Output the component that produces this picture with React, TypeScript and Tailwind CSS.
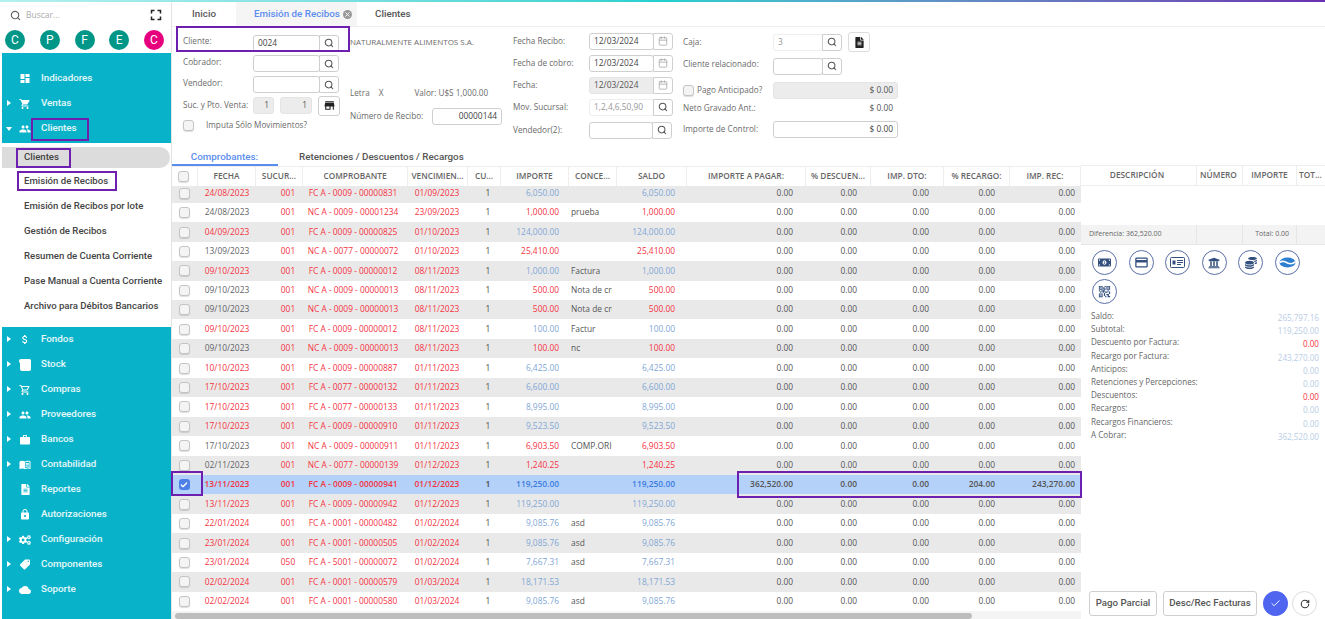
import React from "react";
import { Search, Calendar, Check, RotateCw, X } from "lucide-react";
import {
  MdDashboard, MdShoppingCart, MdPeople, MdAttachMoney, MdWork, MdLock, MdLocalOffer, MdCloud,
  MdMenuBook, MdStore, MdCreditCard, MdQrCode2, MdFullscreen, MdOutlineShoppingCart,
} from "react-icons/md";
import { FaFileAlt, FaCogs, FaMoneyBillAlt, FaUniversity, FaCoins } from "react-icons/fa";

const R = "#f5333f", G = "#5f6368", B = "#7fa7d6";

type Row = [string, string, string, string, string, string, string, string, string, string, string, string, string];
const z = ["0.00", "0.00", "0.00", "0.00", "0.00"] as const;
const mk = (f: string, s: string, c: string, v: string, i: string, n: string): Row => [f, s, c, v, "1", i, n, i, ...z];
const rows: { d: Row; dc: string; ac: string; sel?: boolean }[] = [
  { d: mk("24/08/2023","001","FC A - 0009 - 00000831","01/09/2023","6,050.00",""), dc: R, ac: B },
  { d: mk("24/08/2023","001","NC A - 0009 - 00001234","23/09/2023","1,000.00","prueba"), dc: G, ac: R },
  { d: mk("04/09/2023","001","FC A - 0009 - 00000825","01/10/2023","124,000.00",""), dc: R, ac: B },
  { d: mk("13/09/2023","001","NC A - 0077 - 00000072","01/10/2023","25,410.00",""), dc: G, ac: R },
  { d: mk("09/10/2023","001","FC A - 0009 - 00000012","08/11/2023","1,000.00","Factura"), dc: R, ac: B },
  { d: mk("09/10/2023","001","NC A - 0009 - 00000013","08/11/2023","500.00","Nota de credito"), dc: G, ac: R },
  { d: mk("09/10/2023","001","NC A - 0009 - 00000013","08/11/2023","500.00","Nota de credito"), dc: G, ac: R },
  { d: mk("09/10/2023","001","FC A - 0009 - 00000012","08/11/2023","100.00","Factur"), dc: R, ac: B },
  { d: mk("09/10/2023","001","NC A - 0009 - 00000013","08/11/2023","100.00","nc"), dc: G, ac: R },
  { d: mk("10/10/2023","001","FC A - 0009 - 00000887","01/11/2023","6,425.00",""), dc: R, ac: B },
  { d: mk("17/10/2023","001","FC A - 0077 - 00000132","01/11/2023","6,600.00",""), dc: R, ac: B },
  { d: mk("17/10/2023","001","FC A - 0077 - 00000133","01/11/2023","8,995.00",""), dc: R, ac: B },
  { d: mk("17/10/2023","001","FC A - 0009 - 00000910","01/11/2023","9,523.50",""), dc: R, ac: B },
  { d: mk("17/10/2023","001","NC A - 0009 - 00000911","01/11/2023","6,903.50","COMP.ORIGINAL"), dc: G, ac: R },
  { d: mk("02/11/2023","001","NC A - 0077 - 00000139","01/12/2023","1,240.25",""), dc: G, ac: R },
  { d: ["13/11/2023","001","FC A - 0009 - 00000941","01/12/2023","1","119,250.00","","119,250.00","362,520.00","0.00","0.00","204.00","243,270.00"], dc: R, ac: "#3d7ce0", sel: true },
  { d: mk("13/11/2023","001","FC A - 0009 - 00000942","01/12/2023","119,250.00",""), dc: R, ac: B },
  { d: mk("22/01/2024","001","FC A - 0001 - 00000482","01/02/2024","9,085.76","asd"), dc: R, ac: B },
  { d: mk("23/01/2024","001","FC A - 0001 - 00000505","01/02/2024","9,085.76","asd"), dc: R, ac: B },
  { d: mk("23/01/2024","050","FC A - 5001 - 00000072","01/02/2024","7,667.31","asd"), dc: R, ac: B },
  { d: mk("02/02/2024","001","FC A - 0001 - 00000579","01/03/2024","18,171.53",""), dc: R, ac: B },
  { d: mk("02/02/2024","001","FC A - 0001 - 00000580","01/03/2024","9,085.76","asd"), dc: R, ac: B },
];

const headers: { t: string; w: string }[] = [
  { t: "FECHA", w: "w-[58px]" }, { t: "SUCUR...", w: "w-[47px]" }, { t: "COMPROBANTE", w: "w-[105px]" },
  { t: "VENCIMIEN...", w: "w-[60px]" }, { t: "CU...", w: "w-[33px]" }, { t: "IMPORTE", w: "w-[68px]" },
  { t: "CONCE...", w: "w-[48px]" }, { t: "SALDO", w: "w-[70px]" }, { t: "IMPORTE A PAGAR:", w: "w-[119px]" },
  { t: "% DESCUEN...", w: "w-[65px]" }, { t: "IMP. DTO:", w: "w-[73px]" }, { t: "% RECARGO:", w: "w-[66px]" }, { t: "IMP. REC:", w: "w-[71px]" },
];

function Box() {
  return <span className="block w-[11px] h-[11px] rounded-[3px] border border-[#c4c4c4] bg-[#f4f4f4] shadow-[0_1px_1px_#0002]" />;
}

function MenuItem({ icon, label, arrow, open }: { icon: React.ReactNode; label: string; arrow?: boolean; open?: boolean }) {
  return (
    <div className="h-[25px] flex items-center text-white/90 text-[9.8px] font-medium relative pl-[17px]">
      {arrow && (open
        ? <span className="absolute left-[4px] top-[11px] border-x-[3px] border-x-transparent border-t-[4px] border-t-white" />
        : <span className="absolute left-[5px] top-[9px] border-y-[3px] border-y-transparent border-l-[4px] border-l-white" />)}
      <span className="w-[12px] h-[14px] flex items-center justify-center text-white">{icon}</span>
      <span className="ml-[10px]">{label}</span>
    </div>
  );
}

function Avatar({ c, pink }: { c: string; pink?: boolean }) {
  return <span className={`w-[20px] h-[20px] rounded-full text-white text-[12px] flex items-center justify-center ${pink ? "bg-[#e6007e]" : "bg-[#009688]"}`}>{c}</span>;
}

function Input({ w, v, right, disabled, faint }: { w: string; v?: string; right?: boolean; disabled?: boolean; faint?: boolean }) {
  return (
    <span className={`${w} h-[17px] px-[4px] flex items-center text-[8.4px] rounded-[3px] border ${faint ? "border-[#eeeeee] text-[#999]" : disabled ? "border-[#e4e4e4] bg-[#ececec] text-[#555]" : "border-[#cfcfcf] text-[#444]"} ${right ? "justify-end" : ""}`}>{v}</span>
  );
}

function IconBtn({ kind }: { kind: "search" | "cal" }) {
  return (
    <span className="w-[20px] h-[17px] flex items-center justify-center border border-[#cfcfcf] rounded-r-[3px] -ml-px bg-white text-[#555]">
      {kind === "search" ? <Search size={10} strokeWidth={2.5} /> : <Calendar size={10} className="text-[#aaa]" />}
    </span>
  );
}

function Lookup({ w, v, faint }: { w: string; v?: string; faint?: boolean }) {
  return <span className="flex"><Input w={w} v={v} faint={faint} /><IconBtn kind="search" /></span>;
}

function DateField({ disabled }: { disabled?: boolean }) {
  return <span className="flex"><Input w="w-[65px]" v="12/03/2024" disabled={disabled} /><IconBtn kind="cal" /></span>;
}

function Label({ children, w, up }: { children: React.ReactNode; w?: string; up?: boolean }) {
  return <span className={`${w ?? ""} ${up ? "pb-[3px]" : ""} text-[8.2px] text-[#6b6b6b] whitespace-nowrap`}>{children}</span>;
}

function Round({ children }: { children: React.ReactNode }) {
  return <span className="w-[25px] h-[25px] rounded-full border border-[#5a6fa8] flex items-center justify-center text-[#33507f]">{children}</span>;
}

const LB = "#b9cde6";
const totals: [string, string, string][] = [
  ["Saldo:", "265,797.16", LB], ["Subtotal:", "119,250.00", LB], ["Descuento por Factura:", "0.00", R],
  ["Recargo por Factura:", "243,270.00", LB], ["Anticipos:", "0.00", LB], ["Retenciones y Percepciones:", "0.00", LB],
  ["Descuentos:", "0.00", R], ["Recargos:", "0.00", LB], ["Recargos Financieros:", "0.00", LB], ["A Cobrar:", "362,520.00", LB],
];

export default function App() {
  return (
    <div className="w-[1325px] h-[619px] overflow-hidden bg-white relative font-['Open_Sans',sans-serif]">
      <div className="h-[2px] bg-gradient-to-r from-[#b5f0f0] via-[#20d0d0] to-[#6a2fb0]" />
      <div className="flex h-[617px]">
        {/* Sidebar */}
        <aside className="w-[172px] shrink-0 pl-[2px] border-r border-r-[#e4e4e4] font-['Roboto',sans-serif] flex flex-col">
          <div className="h-[24px] mt-[1px] flex items-center pl-[8px] pr-[6px] text-[#aaa] text-[8.5px]">
            <Search size={11} className="text-[#666]" strokeWidth={2.5} />
            <span className="ml-[5px] flex-1 font-['Open_Sans',sans-serif]">Buscar...</span>
            <MdFullscreen size={18} className="text-[#222]" />
          </div>
          <div className="h-[26px] flex items-center justify-between pl-[3px] pr-[7px]">
            <Avatar c="C" /><Avatar c="P" /><Avatar c="F" /><Avatar c="E" /><Avatar c="C" pink />
          </div>
          <div className="bg-[#08b3c9] pt-[13px] h-[90px]">
            <MenuItem icon={<MdDashboard size={13} />} label="Indicadores" />
            <MenuItem icon={<MdShoppingCart size={14} />} label="Ventas" arrow />
            <MenuItem icon={<MdPeople size={14} />} label="Clientes" arrow open />
          </div>
          <div className="h-[184px] pt-[4px] text-[9.6px] font-medium text-[#444] bg-white">
            <div className="h-[21px] flex items-center pl-[22px] bg-[#dcdcdc] rounded-r-full mr-[1px]">Clientes</div>
            <div className="h-[25px] flex items-center pl-[22px] mt-[1px]">Emisión de Recibos</div>
            {["Emisión de Recibos por lote", "Gestión de Recibos", "Resumen de Cuenta Corriente", "Pase Manual a Cuenta Corriente", "Archivo para Débitos Bancarios"].map((t) => (
              <div key={t} className="h-[25px] flex items-center pl-[22px] whitespace-nowrap">{t}</div>
            ))}
          </div>
          <div className="bg-[#08b3c9] flex-1">
            <MenuItem icon={<MdAttachMoney size={15} />} label="Fondos" arrow />
            <MenuItem icon={
              <svg width="12" height="12" viewBox="0 0 12 12" fill="currentColor"><path d="M2 0h8.5A1.5 1.5 0 0 1 12 1.5V10a2 2 0 0 1-2 2H3a2 2 0 0 1-2-2V3.5H0V2a2 2 0 0 1 2-2Z" /></svg>
            } label="Stock" arrow />
            <MenuItem icon={<MdOutlineShoppingCart size={14} />} label="Compras" arrow />
            <MenuItem icon={<MdPeople size={14} />} label="Proveedores" arrow />
            <MenuItem icon={<MdWork size={14} />} label="Bancos" arrow />
            <MenuItem icon={<MdMenuBook size={13} />} label="Contabilidad" arrow />
            <MenuItem icon={<FaFileAlt size={11} />} label="Reportes" />
            <MenuItem icon={<MdLock size={13} />} label="Autorizaciones" />
            <MenuItem icon={<FaCogs size={12} />} label="Configuración" arrow />
            <MenuItem icon={<MdLocalOffer size={13} className="-scale-x-100" />} label="Componentes" arrow />
            <MenuItem icon={<MdCloud size={14} />} label="Soporte" arrow />
          </div>
        </aside>

        {/* Main */}
        <main className="flex-1 min-w-0 flex flex-col">
          <div className="h-[25px] flex font-['Roboto',sans-serif] text-[9.8px] font-medium text-[#555] border-b border-[#eeeeee]">
            <div className="w-[64px] flex items-center justify-center">Inicio</div>
            <div className="w-[121px] flex items-center pl-[18px] bg-[#f5f5f5] text-[#5b8def] whitespace-nowrap">
              Emisión de Recibos
              <span className="ml-[3px] w-[9px] h-[9px] rounded-full bg-[#999] flex items-center justify-center text-white"><X size={7} strokeWidth={3} /></span>
            </div>
            <div className="ml-[18px] flex items-center">Clientes</div>
          </div>

          {/* Form */}
          <div className="h-[121px] flex pl-[11px] pt-[5px]">
            <div className="w-[167px] flex flex-col">
              <div className="h-[22px] shrink-0 flex items-center"><Label up w="w-[70px]">Cliente:</Label><Lookup w="w-[67px]" v="0024" /></div>
              <div className="h-[19px] shrink-0 flex items-center"><Label up w="w-[70px]">Cobrador:</Label><Lookup w="w-[67px]" /></div>
              <div className="h-[23px] shrink-0 flex items-center"><Label up w="w-[70px]">Vendedor:</Label><Lookup w="w-[67px]" /></div>
              <div className="h-[19px] shrink-0 flex items-center">
                <Label w="w-[70px]">Suc. y Pto. Venta:</Label>
                <Input w="w-[21px]" v="1" right disabled /><span className="w-[6px]" /><Input w="w-[32px]" v="1" right disabled />
                <span className="ml-[6px] w-[22px] h-[20px] border border-[#cfcfcf] rounded-[3px] flex items-center justify-center text-[#222]"><MdStore size={13} /></span>
              </div>
              <div className="h-[20px] shrink-0 flex items-center"><Box /><span className="ml-[12px] text-[8.2px] text-[#6b6b6b]">Imputa Sólo Movimientos?</span></div>
            </div>
            <div className="w-[163px] flex flex-col">
              <div className="h-[19px] flex items-center text-[8px] text-[#6b6b6b] whitespace-nowrap">NATURALMENTE ALIMENTOS S.A.</div>
              <div className="h-[32px]" />
              <div className="h-[20px] flex items-center text-[8.2px] text-[#6b6b6b] whitespace-nowrap"><span>Letra</span><span className="ml-[9px]">X</span><span className="ml-[31px]">Valor: U$S 1,000.00</span></div>
              <div className="h-[27px] flex items-center"><Label w="w-[82px]">Número de Recibo:</Label><Input w="w-[70px]" v="00000144" right /></div>
            </div>
            <div className="w-[170px] flex flex-col -mt-[2px]">
              <div className="h-[22px] shrink-0 flex items-center"><Label w="w-[76px]">Fecha Recibo:</Label><DateField /></div>
              <div className="h-[22px] shrink-0 flex items-center"><Label w="w-[76px]">Fecha de cobro:</Label><DateField /></div>
              <div className="h-[22px] shrink-0 flex items-center"><Label w="w-[76px]">Fecha:</Label><DateField disabled /></div>
              <div className="h-[22px] shrink-0 flex items-center"><Label w="w-[76px]">Mov. Sucursal:</Label><Lookup w="w-[65px]" v="1,2,4,6,50,90" faint /></div>
              <div className="h-[24px] shrink-0 flex items-center"><Label w="w-[76px]">Vendedor(2):</Label><Lookup w="w-[64px]" /></div>
            </div>
            <div className="flex flex-col">
              <div className="h-[20px] shrink-0 flex items-center"><Label w="w-[90px]">Caja:</Label><Lookup w="w-[50px]" v="3" faint /><span className="ml-[6px] w-[22px] h-[20px] border border-[#ddd] rounded-[3px] flex items-center justify-center text-[#222]"><FaFileAlt size={11} /></span></div>
              <div className="h-[28px] shrink-0 flex items-center"><Label up w="w-[90px]">Cliente relacionado:</Label><Lookup w="w-[50px]" /></div>
              <div className="h-[21px] shrink-0 flex items-center"><Box /><span className="ml-[3px] w-[76px] text-[8.2px] text-[#6b6b6b] whitespace-nowrap">Pago Anticipado?</span><Input w="w-[125px]" v="$ 0.00" right disabled /></div>
              <div className="h-[15px] shrink-0 flex items-center"><Label w="w-[90px]">Neto Gravado Ant.:</Label><span className="w-[125px] text-right pr-[5px] text-[8.4px] text-[#555]">$ 0.00</span></div>
              <div className="h-[26px] shrink-0 flex items-center"><Label w="w-[90px]">Importe de Control:</Label><Input w="w-[125px]" v="$ 0.00" right /></div>
            </div>
          </div>

          {/* Body */}
          <div className="flex flex-1 min-h-0">
            <div className="w-[909px] shrink-0 relative flex flex-col">
              <div className="h-[15px] flex font-['Roboto',sans-serif] text-[9.8px] font-medium text-[#555]">
                <div className="w-[106px] text-center text-[#5b8def] border-b-2 border-[#5b8def] h-[18px] pr-[1px] pt-[2px]">Comprobantes:</div>
                <div className="ml-[21px] pt-[2px]">Retenciones / Descuentos / Recargos</div>
              </div>
              <div className="mt-[3px] h-[20px] shrink-0 flex relative z-10 bg-white border-t border-[#eeeeee] text-[8.3px] font-semibold text-[#666]">
                <div className="w-[26px] flex items-center justify-center pr-[2px] border-r border-[#eeeeee]"><Box /></div>
                {headers.map((h) => (
                  <div key={h.t} className={`${h.w} flex items-center justify-center border-r border-[#eeeeee] whitespace-nowrap overflow-hidden`}>{h.t}</div>
                ))}
              </div>
              <div className="flex-1 -mt-[2.6px] overflow-hidden">
                {rows.map((r, i) => {
                  const [fecha, suc, comp, venc, cu, imp, conc, saldo, pagar, desc, dto, rec, irec] = r.d;
                  const bg = r.sel ? "bg-[#b3d1f9]" : i % 2 === 0 ? "bg-[#e9e9e9]" : "bg-white";
                  const fw = r.sel ? "font-semibold" : "";
                  const num = `text-[#555] text-right ${fw}`;
                  return (
                    <div key={i} className={`h-[19.45px] flex items-center text-[8.4px] whitespace-nowrap ${bg} ${fw}`}>
                      <div className="w-[26px] flex justify-center pr-[2px]">
                        {r.sel ? <span className="w-[11px] h-[11px] rounded-[3px] bg-[#4f80e8] flex items-center justify-center text-white"><Check size={8} strokeWidth={4} /></span> : <Box />}
                      </div>
                      <div className="w-[58px] text-center" style={{ color: r.dc }}>{fecha}</div>
                      <div className="w-[47px] text-center pl-[17px]" style={{ color: R }}>{suc}</div>
                      <div className="w-[105px] text-center pr-[5px]" style={{ color: R }}>{comp}</div>
                      <div className="w-[60px] text-center pr-[2px]" style={{ color: R }}>{venc}</div>
                      <div className="w-[33px] text-center text-[#4a4a4a] pl-[7px]">{cu}</div>
                      <div className="w-[68px] text-right pr-[10px]" style={{ color: r.ac }}>{imp}</div>
                      <div className="w-[48px] pl-[2px] text-[#555]"><div className="w-[41px] overflow-hidden">{conc}</div></div>
                      <div className="w-[70px] text-right pr-[12px]" style={{ color: r.ac }}>{saldo}</div>
                      <div className={`w-[119px] pr-[13px] ${num}`}>{pagar}</div>
                      <div className={`w-[65px] pr-[14px] ${num}`}>{desc}</div>
                      <div className={`w-[73px] pr-[15px] ${num}`}>{dto}</div>
                      <div className={`w-[66px] pr-[15px] ${num}`}>{rec}</div>
                      <div className={`w-[71px] pr-[6px] ${num}`}>{irec}</div>
                    </div>
                  );
                })}
              </div>
            </div>

            {/* Right panel */}
            <div className="flex-1 min-w-0 flex flex-col relative">
              <div className="mt-[17px] h-[21px] flex text-[8.3px] font-semibold text-[#666] border-y border-[#eeeeee]">
                <div className="w-[116px] flex items-center justify-center pr-[3px] border-r border-[#eeeeee]">DESCRIPCIÓN</div>
                <div className="w-[46px] flex items-center justify-center pr-[2px] border-r border-[#eeeeee]">NÚMERO</div>
                <div className="w-[54px] flex items-center justify-center border-r border-[#eeeeee]">IMPORTE</div>
                <div className="flex-1 flex items-center pl-[2px]">TOT...</div>
              </div>
              <div className="h-[39px]" />
              <div className="h-[20px] flex items-center bg-[#f3f3f3] text-[7px] text-[#666] border-b border-[#e8e8e8]">
                <div className="w-[116px] pl-[8px] border-r border-[#e6e6e6] h-full flex items-center">Diferencia: 362,520.00</div>
                <div className="w-[46px] border-r border-[#e6e6e6] h-full" />
                <div className="w-[54px] border-r border-[#e6e6e6] h-full flex items-center justify-end pr-[7px]">Total: 0.00</div>
              </div>
              <div className="flex flex-wrap gap-x-[11.5px] gap-y-[4px] pl-[11px] pt-[5px] pr-[20px]">
                <Round><FaMoneyBillAlt size={13} /></Round>
                <Round><MdCreditCard size={15} /></Round>
                <Round>
                  <svg width="15" height="11" viewBox="0 0 15 11" fill="none" stroke="currentColor"><rect x="0.5" y="0.5" width="14" height="10" rx="1" /><rect x="2.5" y="3.5" width="3" height="4" fill="currentColor" stroke="none" /><path d="M7 3.5h6M7 5.5h6M7 7.5h4" /></svg>
                </Round>
                <Round><FaUniversity size={12} /></Round>
                <Round><FaCoins size={12} /></Round>
                <Round>
                  <svg width="17" height="11" viewBox="0 0 17 11"><ellipse cx="8.5" cy="5.5" rx="8" ry="5" fill="#2f7fd0" /><path d="M0.5 5.5Q4 3 8.5 6Q13 8 16.5 4.5" stroke="#fff" strokeWidth="1.6" fill="none" /></svg>
                </Round>
                <Round><MdQrCode2 size={15} /></Round>
              </div>
              <div className="mt-[8px] pl-[10px] pr-[6px] text-[8.1px] text-[#666]">
                {totals.map(([l, v, c]) => (
                  <div key={l} className="h-[13.2px] flex justify-between leading-none"><span>{l}</span><span className="mt-[2px]" style={{ color: c }}>{v}</span></div>
                ))}
              </div>
              <div className="absolute left-[8px] bottom-[3px] flex items-center font-['Roboto',sans-serif] text-[9.7px] font-medium text-[#555]">
                <span className="h-[25px] w-[68px] flex items-center justify-center border border-[#cfcfcf] rounded-[3px]">Pago Parcial</span>
                <span className="ml-[6px] h-[25px] w-[94px] flex items-center justify-center border border-[#cfcfcf] rounded-[3px]">Desc/Rec Facturas</span>
                <span className="ml-[6px] w-[25px] h-[25px] rounded-full bg-[#4f65f0] flex items-center justify-center text-white"><Check size={11} /></span>
                <span className="ml-[4px] w-[25px] h-[25px] rounded-full border border-[#ddd] flex items-center justify-center text-[#333]"><RotateCw size={10} strokeWidth={2.5} /></span>
              </div>
            </div>
          </div>
        </main>
      </div>

      {/* horizontal scrollbar */}
      <div className="absolute left-[172px] w-[909px] top-[611px] h-[8px] bg-[#f4f4f4]">
        <div className="ml-[3px] mt-[2px] w-[797px] h-[6px] rounded-full bg-[#bdbdbd]" />
      </div>

      {/* purple annotation boxes */}
      <div className="absolute left-[176px] top-[26px] w-[174px] h-[26px] border-2 border-[#6d1fb0]" />
      <div className="absolute left-[31px] top-[118px] w-[58px] h-[23px] border-2 border-[#6d1fb0]" />
      <div className="absolute left-[16px] top-[148px] w-[55px] h-[20px] border-2 border-[#6d1fb0]" />
      <div className="absolute left-[17px] top-[171px] w-[100px] h-[20px] border-2 border-[#6d1fb0]" />
      <div className="absolute left-[171px] top-[471px] w-[32px] h-[25px] border-2 border-[#6d1fb0]" />
      <div className="absolute left-[737px] top-[471px] w-[345px] h-[27px] border-2 border-[#6d1fb0]" />
    </div>
  );
}
